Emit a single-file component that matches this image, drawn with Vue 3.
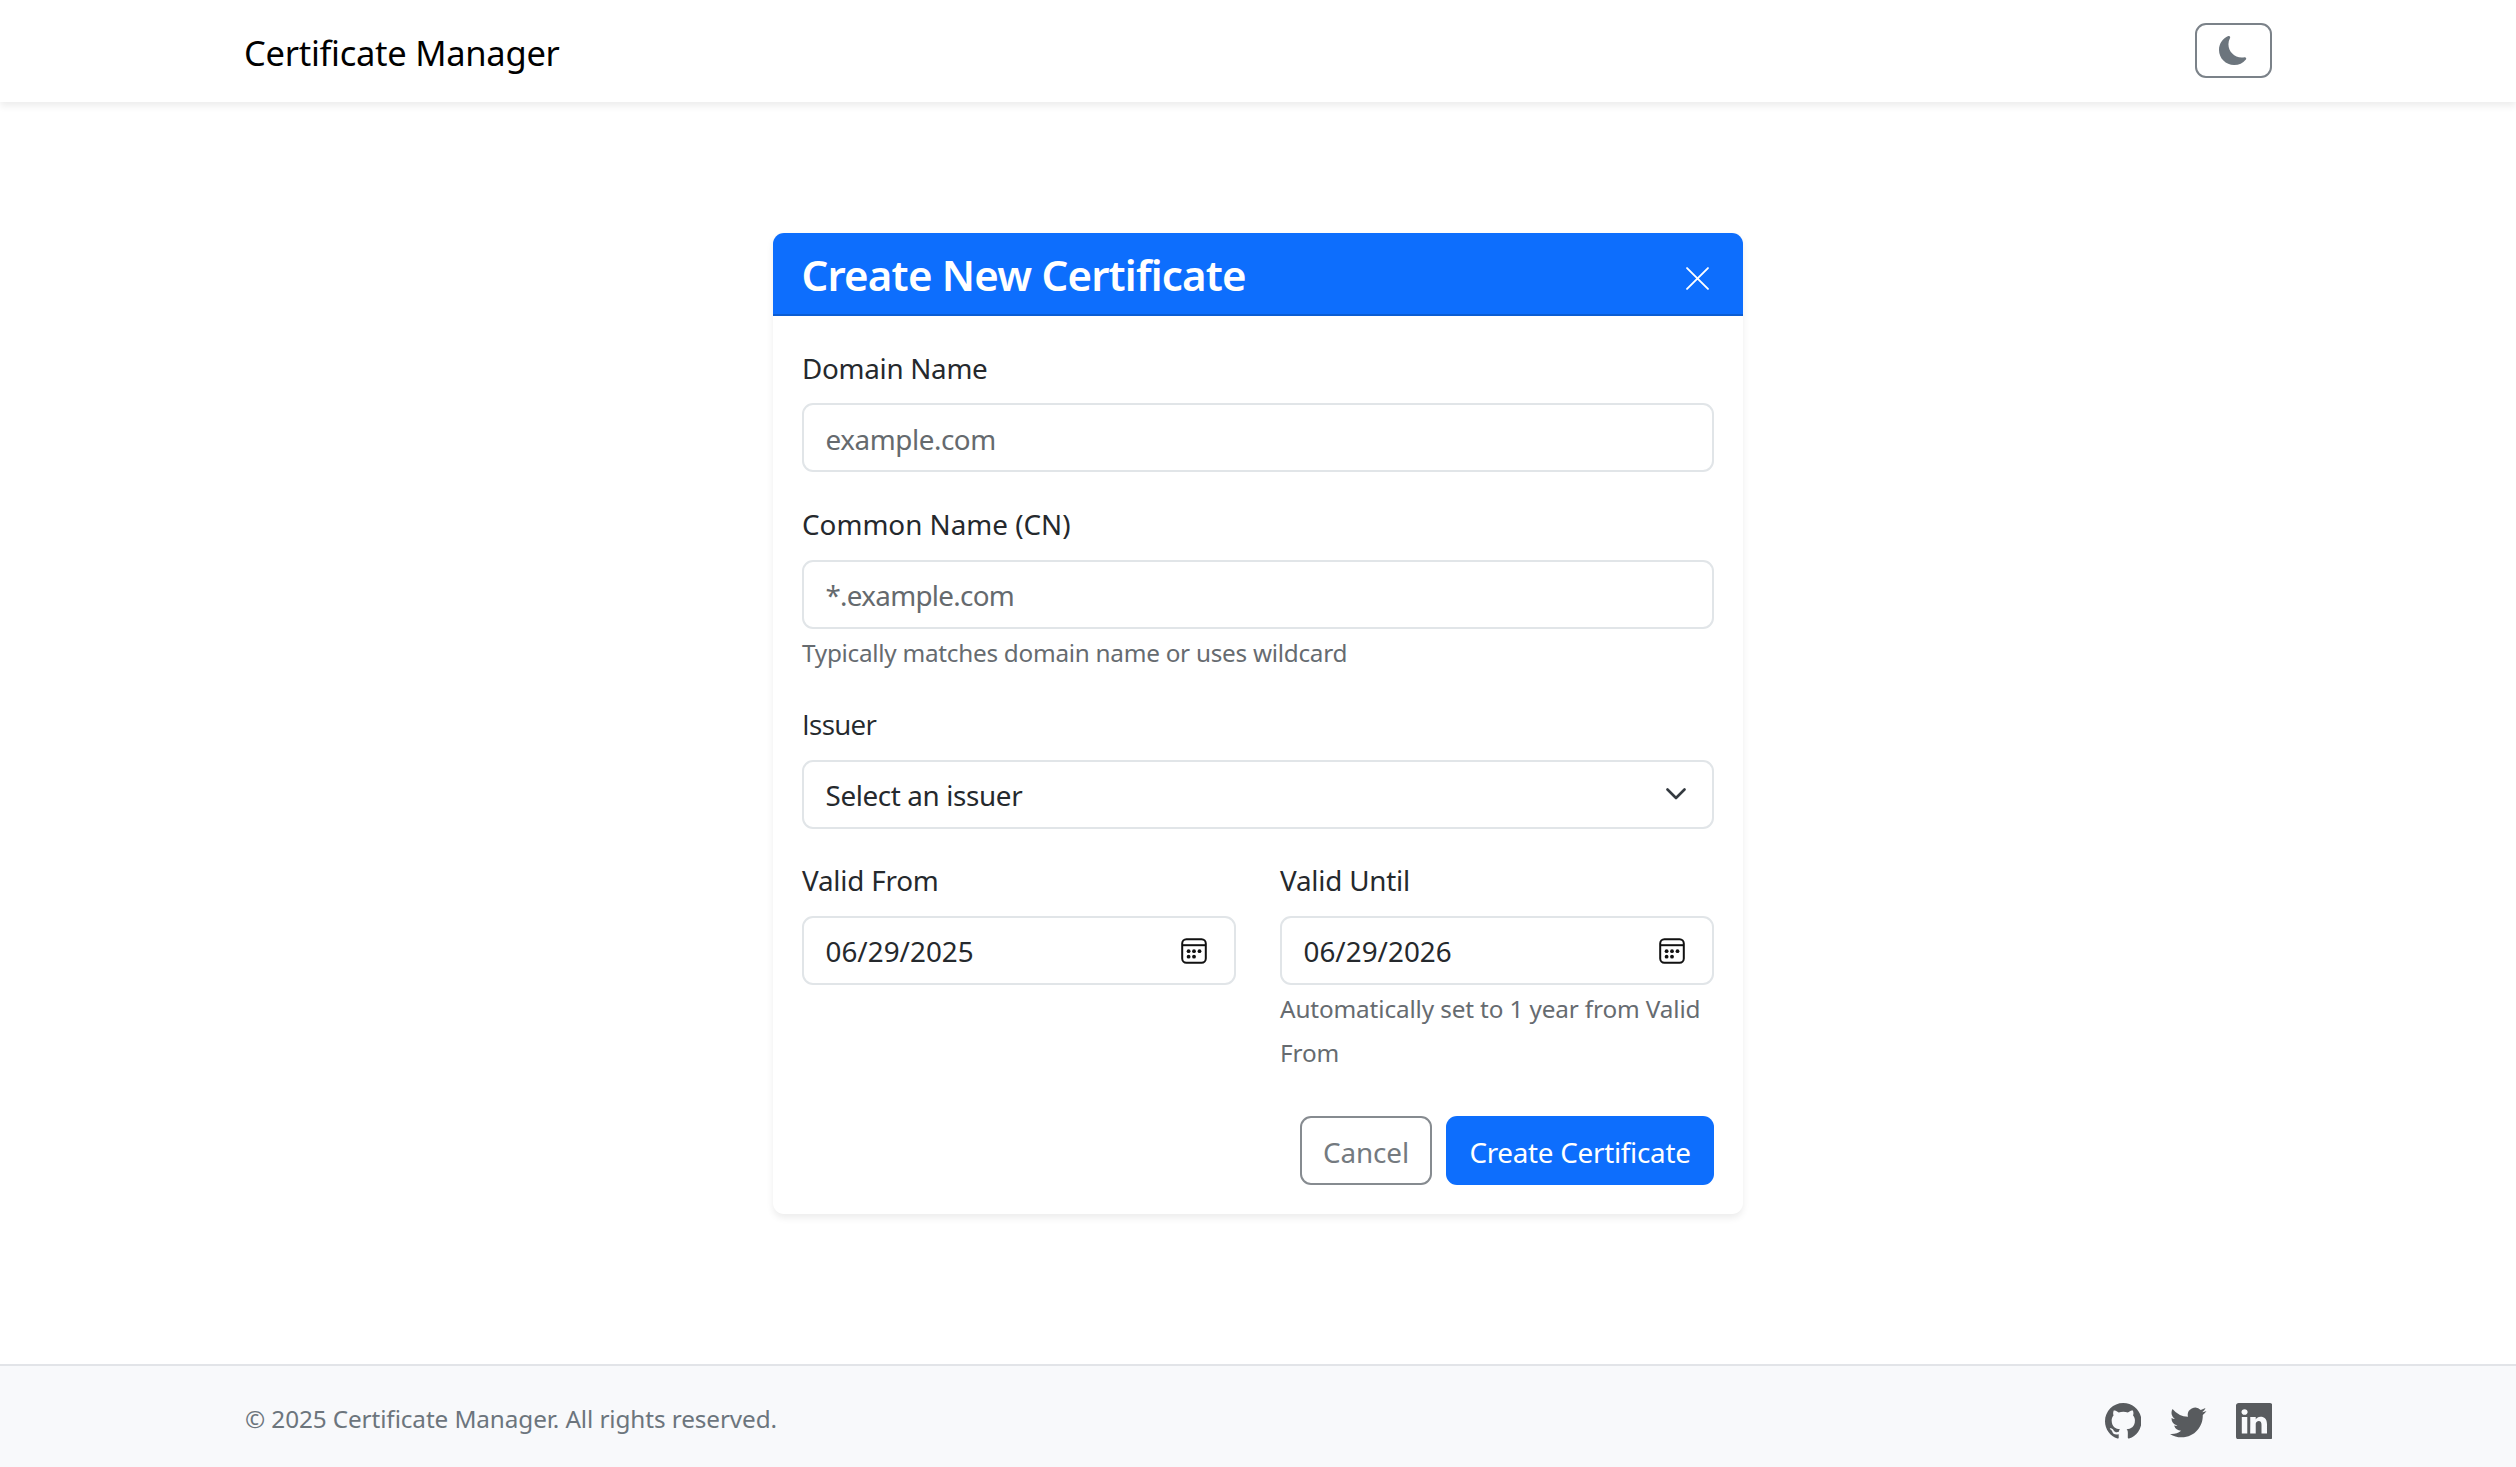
<script setup>
import { ref } from 'vue'

const domain = ref('')
const commonName = ref('')
const validFrom = ref('06/29/2025')
const validUntil = ref('06/29/2026')

const social = [
  {
    name: 'github',
    path: 'M8 0C3.58 0 0 3.58 0 8c0 3.54 2.29 6.53 5.47 7.59.4.07.55-.17.55-.38 0-.19-.01-.82-.01-1.49-2.01.37-2.53-.49-2.69-.94-.09-.23-.48-.94-.82-1.13-.28-.15-.68-.52-.01-.53.63-.01 1.08.58 1.23.82.72 1.21 1.87.87 2.33.66.07-.52.28-.87.51-1.07-1.78-.2-3.64-.89-3.64-3.95 0-.87.31-1.59.82-2.15-.08-.2-.36-1.02.08-2.12 0 0 .67-.21 2.2.82.64-.18 1.32-.27 2-.27s1.36.09 2 .27c1.53-1.04 2.2-.82 2.2-.82.44 1.1.16 1.92.08 2.12.51.56.82 1.27.82 2.15 0 3.07-1.87 3.75-3.65 3.95.29.25.54.73.54 1.48 0 1.07-.01 1.93-.01 2.2 0 .21.15.46.55.38A8.01 8.01 0 0 0 16 8c0-4.42-3.58-8-8-8',
  },
  {
    name: 'twitter',
    path: 'M5.026 15c6.038 0 9.341-5.003 9.341-9.334q.002-.211-.006-.422A6.7 6.7 0 0 0 16 3.542a6.7 6.7 0 0 1-1.889.518 3.3 3.3 0 0 0 1.447-1.817 6.5 6.5 0 0 1-2.087.793A3.286 3.286 0 0 0 7.875 6.03a9.32 9.32 0 0 1-6.767-3.429 3.29 3.29 0 0 0 1.018 4.382A3.3 3.3 0 0 1 .64 6.575v.045a3.29 3.29 0 0 0 2.632 3.218 3.2 3.2 0 0 1-.865.115 3 3 0 0 1-.614-.057 3.28 3.28 0 0 0 3.067 2.277A6.6 6.6 0 0 1 .78 13.58a6 6 0 0 1-.78-.045A9.34 9.34 0 0 0 5.026 15',
  },
  {
    name: 'linkedin',
    path: 'M0 1.146C0 .513.526 0 1.175 0h13.65C15.474 0 16 .513 16 1.146v13.708c0 .633-.526 1.146-1.175 1.146H1.175C.526 16 0 15.487 0 14.854zm4.943 12.248V6.169H2.542v7.225zm-1.2-8.212c.837 0 1.358-.554 1.358-1.248-.015-.709-.52-1.248-1.342-1.248S2.4 3.226 2.4 3.934c0 .694.521 1.248 1.327 1.248zm4.908 8.212V9.359c0-.216.016-.432.08-.586.173-.431.568-.878 1.232-.878.869 0 1.216.662 1.216 1.634v3.865h2.401V9.25c0-2.22-1.184-3.252-2.764-3.252-1.274 0-1.845.7-2.165 1.193v.025h-.016l.016-.025V6.169h-2.4c.03.678 0 7.225 0 7.225z',
  },
]
</script>

<template>
  <div class="page">
    <header class="navbar">
      <a class="brand">Certificate Manager</a>
      <button class="theme" aria-label="Toggle theme">
        <svg viewBox="0 0 16 16" fill="currentColor">
          <path d="M6 .278a.77.77 0 0 1 .08.858 7.2 7.2 0 0 0-.878 3.46c0 4.021 3.278 7.277 7.318 7.277q.792-.001 1.533-.16a.79.79 0 0 1 .81.316.73.73 0 0 1-.031.893A8.35 8.35 0 0 1 8.344 16C3.734 16 0 12.286 0 7.71 0 4.266 2.114 1.312 5.124.06A.75.75 0 0 1 6 .278" />
        </svg>
      </button>
    </header>

    <main class="main">
      <section class="card">
        <div class="card-header">
          <h1>Create New Certificate</h1>
          <svg class="close" viewBox="0 0 22 22" fill="none" stroke="#fff" stroke-width="1.8" stroke-linecap="round">
            <path d="M1 1l20 20M21 1L1 21" />
          </svg>
        </div>

        <form class="card-body" @submit.prevent>
          <div class="group">
            <label class="domain">Domain Name</label>
            <input v-model="domain" class="control" placeholder="example.com" />
          </div>

          <div class="group">
            <label>Common Name (CN)</label>
            <input v-model="commonName" class="control wildcard" placeholder="*.example.com" />
            <small>Typically matches domain name or uses wildcard</small>
          </div>

          <div class="group">
            <label class="issuer">Issuer</label>
            <div class="control select">
              <span>Select an issuer</span>
              <svg viewBox="0 0 20 12" fill="none" stroke="#343a40" stroke-width="2.6" stroke-linecap="round" stroke-linejoin="round">
                <path d="M1.5 1.5L10 10l8.500-8.500" />
              </svg>
            </div>
          </div>

          <div class="dates">
            <div class="group">
              <label class="valid">Valid From</label>
              <div class="control date">
                <span>{{ validFrom }}</span>
                <svg viewBox="0 0 26 26" fill="none" stroke="#111" stroke-width="2">
                  <rect x="1.200" y="1.200" width="23.600" height="23.600" rx="4.200" />
                  <path d="M1.200 7.200h23.600" />
                  <g fill="#111" stroke="none">
                    <circle cx="7.600" cy="13.200" r="1.900" /><circle cx="13" cy="13.200" r="1.900" /><circle cx="18.500" cy="13.200" r="1.900" />
                    <circle cx="7.600" cy="18.700" r="1.900" /><circle cx="13" cy="18.700" r="1.900" />
                  </g>
                </svg>
              </div>
            </div>
            <div class="group">
              <label class="valid">Valid Until</label>
              <div class="control date">
                <span>{{ validUntil }}</span>
                <svg viewBox="0 0 26 26" fill="none" stroke="#111" stroke-width="2">
                  <rect x="1.200" y="1.200" width="23.600" height="23.600" rx="4.200" />
                  <path d="M1.200 7.200h23.600" />
                  <g fill="#111" stroke="none">
                    <circle cx="7.600" cy="13.200" r="1.900" /><circle cx="13" cy="13.200" r="1.900" /><circle cx="18.500" cy="13.200" r="1.900" />
                    <circle cx="7.600" cy="18.700" r="1.900" /><circle cx="13" cy="18.700" r="1.900" />
                  </g>
                </svg>
              </div>
              <small class="auto">Automatically set to 1 year from Valid From</small>
            </div>
          </div>

          <div class="actions">
            <button class="btn cancel" type="button">Cancel</button>
            <button class="btn create" type="submit">Create Certificate</button>
          </div>
        </form>
      </section>
    </main>

    <footer class="footer">
      <span>© 2025 Certificate Manager. All rights reserved.</span>
      <nav>
        <svg v-for="s in social" :key="s.name" viewBox="0 0 16 16" fill="currentColor">
          <path :d="s.path" />
        </svg>
      </nav>
    </footer>
  </div>
</template>

<style>
body {
  background: #fff;
}
</style>

<style scoped>
* {
  box-sizing: border-box;
}
.page {
  height: 1467px;
  display: flex;
  flex-direction: column;
  font-family: "Noto Sans", "Open Sans", sans-serif;
  font-size: 27.8px;
  line-height: 43px;
  color: #25292d;
  background: #fff;
  overflow: hidden;
}
.navbar {
  flex: none;
  height: 102px;
  padding: 0 244px;
  display: flex;
  align-items: center;
  justify-content: space-between;
  background: #fff;
  box-shadow: 0 3.600px 7.200px rgba(0, 0, 0, 0.075);
}
.brand {
  font-size: 34.5px;
  letter-spacing: -0.27px;
  color: #000;
  padding-top: 2px;
}
.theme {
  width: 77px;
  height: 55px;
  margin-bottom: 1px;
  padding: 0 0 1px;
  display: flex;
  align-items: center;
  justify-content: center;
  border: 2px solid #7b8289;
  border-radius: 11px;
  background: #fff;
  color: #6c757d;
}
.theme svg {
  width: 29px;
  height: 29px;
}
.main {
  flex: 1;
  padding-top: 131px;
}
.card {
  width: 970px;
  height: 981px;
  margin: 0 auto;
  border-radius: 11px;
  background: #fff;
  box-shadow: 0 3.600px 7.200px rgba(0, 0, 0, 0.075);
}
.card-header {
  height: 83px;
  padding: 0 34px 0 28.500px;
  display: flex;
  align-items: center;
  justify-content: space-between;
  border-radius: 11px 11px 0 0;
  border-bottom: 2px solid #0c5dd2;
  background: #0d6efd;
}
h1 {
  margin: 0;
  font-size: 42px;
  font-weight: 600;
  line-height: 52px;
  letter-spacing: -0.8px;
  color: #fff;
  padding-top: 2px;
}
.close {
  width: 23px;
  height: 23px;
  margin-top: 9px;
}
.card-body {
  padding: 29px 29px 0;
}
.group {
  margin-bottom: 29px;
}
label {
  display: block;
  height: 58.400px;
  padding-top: 2px;
}
.group + .group label {
  padding-top: 1.500px;
}
.domain {
  letter-spacing: -0.29px;
}
.valid {
  letter-spacing: -0.2px;
}
.issuer {
  font-family: "Open Sans", sans-serif;
  letter-spacing: -0.68px;
}
.control {
  display: flex;
  align-items: center;
  width: 100%;
  height: 69px;
  padding: 2px 23px 0 21.500px;
  border: 2px solid #e1e5e8;
  border-radius: 11px;
  background: #fff;
  font-family: inherit;
  font-size: 27.8px;
  letter-spacing: -0.42px;
  color: #25292d;
  outline: none;
}
.wildcard {
  letter-spacing: -0.7px;
}
.control::placeholder {
  color: #656a6e;
  opacity: 1;
}
.select,
.date {
  justify-content: space-between;
}
.select {
  letter-spacing: -0.36px;
}
.select svg {
  width: 20px;
  height: 12px;
  margin: 0 3px 2px 0;
}
.date {
  padding-right: 27px;
  letter-spacing: 0.03px;
}
.date svg {
  width: 26px;
  height: 26px;
  margin-bottom: 2px;
}
small {
  display: block;
  padding-top: 2px;
  height: 43.500px;
  font-size: 24.3px;
  line-height: 43.500px;
  letter-spacing: -0.264px;
  color: #666b70;
}
.auto {
  height: 87px;
  letter-spacing: -0.128px;
}
.dates {
  display: grid;
  grid-template-columns: 434px 434px;
  justify-content: space-between;
}
.dates .group label {
  padding-top: 1.500px;
}
.actions {
  display: flex;
  justify-content: flex-end;
  gap: 14px;
  margin-top: 15px;
}
.btn {
  height: 69px;
  padding: 2px 0 0;
  border-radius: 11px;
  font-family: inherit;
  font-size: 27.8px;
}
.cancel {
  width: 132px;
  border: 2px solid #868b90;
  background: #fff;
  color: #747a80;
  letter-spacing: -0.1px;
}
.create {
  width: 268px;
  border: none;
  background: #0d6efd;
  color: #fff;
  letter-spacing: -0.27px;
}
.footer {
  flex: none;
  height: 103px;
  padding: 0 244px;
  display: flex;
  align-items: center;
  justify-content: space-between;
  border-top: 2px solid #e2e4e8;
  background: #f8f9fb;
  font-size: 24.3px;
  letter-spacing: -0.1px;
  color: #6c757d;
}
.footer span {
  padding: 4px 0 0 1px;
}
.footer nav {
  display: flex;
  gap: 29px;
  padding: 9px 0 0;
}
.footer svg {
  width: 36.500px;
  height: 36.500px;
  color: #585b5e;
}
</style>
